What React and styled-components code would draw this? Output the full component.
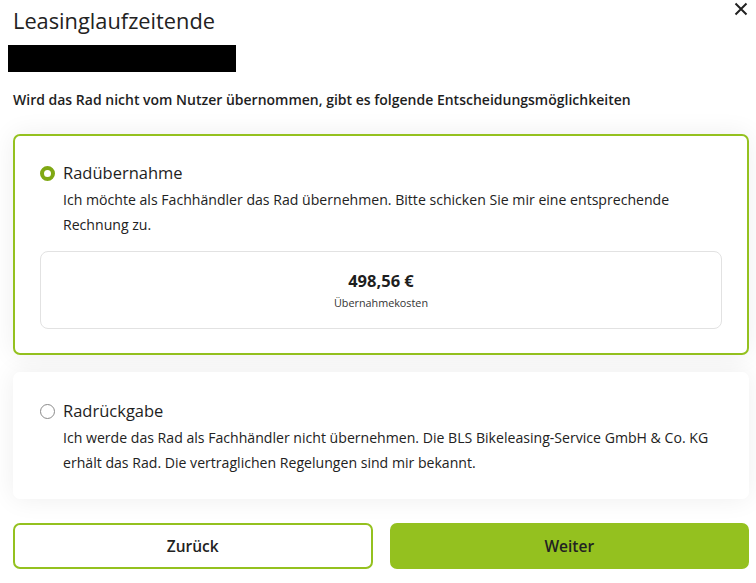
import React from 'react';
import styled, { createGlobalStyle } from 'styled-components';

const GREEN = '#94c11f';

const Global = createGlobalStyle`
  html, body {
    margin: 0;
    background: #fff;
  }
  body {
    font-family: "Open Sans", Lato, sans-serif;
    color: #1e1e1e;
  }
`;

const Dialog = styled.div`
  position: relative;
  width: 756px;
  height: 583px;
  box-sizing: border-box;
  padding: 0 7px 0 13px;
  overflow: hidden;
`;

const Close = styled.button`
  position: absolute;
  top: 2px;
  right: 7px;
  width: 16px;
  height: 16px;
  padding: 0;
  border: 0;
  background: none;
  cursor: pointer;
`;

const Title = styled.h1`
  margin: 0;
  padding-top: 7px;
  font-size: 21.8px;
  font-weight: 500;
  line-height: 28px;
  color: #222;
`;

const Masked = styled.div`
  width: 228px;
  height: 27px;
  margin: 10px 0 0 -5px;
  background: #000;
`;

const Lead = styled.p`
  margin: 19px 0 0;
  font-size: 14px;
  font-weight: 600;
  line-height: 18px;
`;

const Options = styled.div`
  display: flex;
  flex-direction: column;
  gap: 17px;
  margin-top: 25px;
`;

const Card = styled.label`
  display: flex;
  gap: 8px;
  padding: ${(p) => (p.$active ? '25px 25px 24px' : '25px 25px 22px')};
  background: #fff;
  border: 2px solid ${(p) => (p.$active ? GREEN : 'transparent')};
  border-radius: 7px;
  box-shadow: 0 0 26px rgba(0, 0, 0, 0.07);
  cursor: pointer;
`;

const Radio = styled.span`
  flex: none;
  width: 15px;
  height: 15px;
  margin-top: 5px;
  box-sizing: border-box;
  border-radius: 50%;
  border: ${(p) => (p.$checked ? `4px solid #7fa814` : '1px solid #8a8a8a')};
  background: #fff;
`;

const Body = styled.div`
  flex: 1;
  display: flex;
  flex-direction: column;
`;

const OptionTitle = styled.div`
  font-size: 16.5px;
  font-weight: 500;
  line-height: 24px;
  margin-bottom: 2px;
`;

const Text = styled.div`
  font-size: 14.1px;
  line-height: 25px;
  color: #222;
`;

const Cost = styled.div`
  margin: 14px 0 0 -23px;
  padding: 17px 0;
  border: 1px solid #e2e2e2;
  border-radius: 8px;
  display: flex;
  flex-direction: column;
  align-items: center;
  gap: 2px;
`;

const Price = styled.div`
  font-size: 16.5px;
  font-weight: 700;
  line-height: 24px;
`;

const Caption = styled.div`
  font-size: 10.8px;
  line-height: 16px;
  color: #333;
`;

const Actions = styled.div`
  display: grid;
  grid-template-columns: 1fr 1fr;
  gap: 17px;
  margin-top: 24px;
`;

const Button = styled.button`
  height: 46px;
  border-radius: 7px;
  border: 2px solid ${GREEN};
  background: ${(p) => (p.$primary ? GREEN : '#fff')};
  font-family: "Open Sans", sans-serif;
  font-size: 15.5px;
  font-weight: 600;
  color: #222;
  cursor: pointer;
`;

const Option = ({ active, title, children }) => (
  <Card $active={active}>
    <Radio $checked={active} />
    <Body>
      <OptionTitle>{title}</OptionTitle>
      {children}
    </Body>
  </Card>
);

export default function App() {
  return (
    <>
      <Global />
      <Dialog>
        <Close aria-label="Schließen">
          <svg width="14" height="14" viewBox="0 0 14 14">
            <path d="M1.5 1.5l11 11M12.5 1.5l-11 11" stroke="#222" strokeWidth="2" />
          </svg>
        </Close>
        <Title>Leasinglaufzeitende</Title>
        <Masked />
        <Lead>Wird das Rad nicht vom Nutzer übernommen, gibt es folgende Entscheidungsmöglichkeiten</Lead>
        <Options>
          <Option active title="Radübernahme">
            <Text>
              Ich möchte als Fachhändler das Rad übernehmen. Bitte schicken Sie mir eine entsprechende
              Rechnung zu.
            </Text>
            <Cost>
              <Price>498,56 €</Price>
              <Caption>Übernahmekosten</Caption>
            </Cost>
          </Option>
          <Option title="Radrückgabe">
            <Text>
              Ich werde das Rad als Fachhändler nicht übernehmen. Die BLS Bikeleasing-Service GmbH &amp; Co. KG
              erhält das Rad. Die vertraglichen Regelungen sind mir bekannt.
            </Text>
          </Option>
        </Options>
        <Actions>
          <Button>Zurück</Button>
          <Button $primary>Weiter</Button>
        </Actions>
      </Dialog>
    </>
  );
}
